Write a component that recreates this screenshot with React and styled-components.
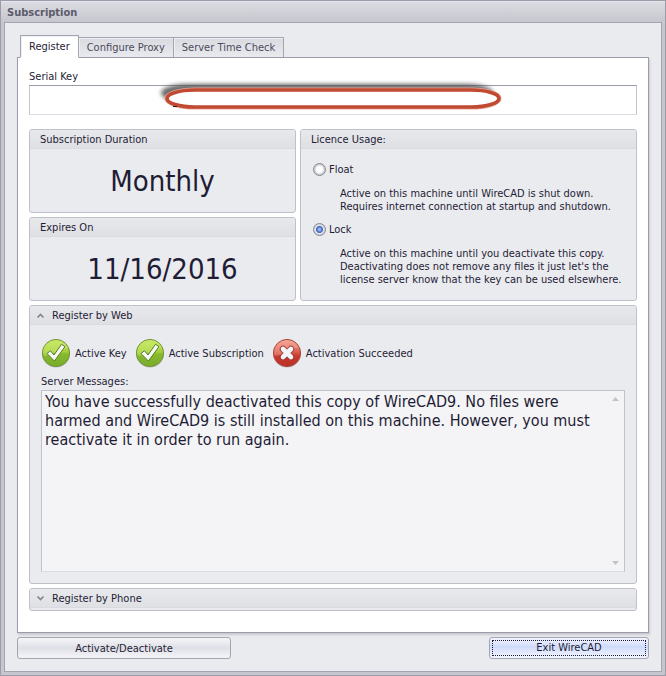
import { useState } from "react";
import styled, { createGlobalStyle, css } from "styled-components";

const MESSAGE = `You have successfully deactivated this copy of WireCAD9. No files were
harmed and WireCAD9 is still installed on this machine. However, you must
reactivate it in order to run again.`;

export default function App() {
  const [tab, setTab] = useState("Register");
  const [usage, setUsage] = useState("lock");
  const [serial, setSerial] = useState("");

  return (
    <>
      <GlobalStyle />
      <Window>
        <TitleBar>Subscription</TitleBar>
        <Body>
          <Tabs role="tablist">
            {["Register", "Configure Proxy", "Server Time Check"].map((name) => (
              <Tab
                key={name}
                type="button"
                role="tab"
                aria-selected={tab === name}
                $active={tab === name}
                onClick={() => setTab(name)}
              >
                {name}
              </Tab>
            ))}
          </Tabs>

          <Page>
            <FieldLabel htmlFor="serial">Serial Key</FieldLabel>
            <SerialWrapper>
              <SerialInput
                id="serial"
                type="text"
                value={serial}
                onChange={(e) => setSerial(e.target.value)}
              />
              <Marker />
            </SerialWrapper>

            <Columns>
              <Stack>
                <Group>
                  <GroupHeader>Subscription Duration</GroupHeader>
                  <BigValue>Monthly</BigValue>
                </Group>
                <Group>
                  <GroupHeader>Expires On</GroupHeader>
                  <BigValue>11/16/2016</BigValue>
                </Group>
              </Stack>

              <Group>
                <GroupHeader>Licence Usage:</GroupHeader>
                <Options>
                  <Option>
                    <Radio
                      type="radio"
                      name="usage"
                      checked={usage === "float"}
                      onChange={() => setUsage("float")}
                    />
                    Float
                  </Option>
                  <Hint>
                    Active on this machine until WireCAD is shut down.
                    <br />
                    Requires internet connection at startup and shutdown.
                  </Hint>
                  <Option>
                    <Radio
                      type="radio"
                      name="usage"
                      checked={usage === "lock"}
                      onChange={() => setUsage("lock")}
                    />
                    Lock
                  </Option>
                  <Hint>
                    Active on this machine until you deactivate this copy.
                    <br />
                    Deactivating does not remove any files it just let's the
                    <br />
                    license server know that the key can be used elsewhere.
                  </Hint>
                </Options>
              </Group>
            </Columns>

            <WebGroup>
              <Expander type="button" aria-expanded="true">
                <Chevron up />
                Register by Web
              </Expander>
              <WebBody>
                <Statuses>
                  <Status>
                    <OkIcon id="key" />
                    Active Key
                  </Status>
                  <Status>
                    <OkIcon id="sub" />
                    Active Subscription
                  </Status>
                  <Status>
                    <ErrorIcon />
                    Activation Succeeded
                  </Status>
                </Statuses>
                <FieldLabel htmlFor="messages">Server Messages:</FieldLabel>
                <MessageBox>
                  <Messages id="messages" readOnly value={MESSAGE} />
                  <ScrollTrack>
                    <Arrow up />
                    <Arrow />
                  </ScrollTrack>
                </MessageBox>
              </WebBody>
            </WebGroup>

            <PhoneGroup>
              <Expander type="button" aria-expanded="false">
                <Chevron />
                Register by Phone
              </Expander>
            </PhoneGroup>
          </Page>

          <Footer>
            <Button type="button" $width={214}>Activate/Deactivate</Button>
            <Button type="button" $width={160} $focused>
              <span>Exit WireCAD</span>
            </Button>
          </Footer>
        </Body>
      </Window>
    </>
  );
}

function Marker() {
  return (
    <MarkerSvg width="352" height="40" viewBox="0 0 352 40" aria-hidden="true">
      <defs>
        <filter id="soft" x="-5%" y="-50%" width="110%" height="200%">
          <feGaussianBlur stdDeviation="2" />
        </filter>
      </defs>
      <rect x="6" y="8" width="332" height="18" rx="26" ry="9" fill="#444" opacity="0.8" filter="url(#soft)" />
      <rect x="12" y="14" width="332" height="17" rx="28" ry="8.5" fill="#fff" stroke="#e8a899" strokeWidth="5" />
      <rect x="12" y="14" width="332" height="17" rx="28" ry="8.5" fill="#fff" stroke="#c14a32" strokeWidth="3.6" />
      <path d="M18 30.500h4" stroke="#222" strokeWidth="1" />
    </MarkerSvg>
  );
}

function Chevron({ up }) {
  return (
    <svg width="9" height="7" viewBox="0 0 9 7" aria-hidden="true">
      <path
        d={up ? "M1.500 5.500L4.500 2.500L7.500 5.500" : "M1.500 1.500L4.500 4.500L7.500 1.500"}
        fill="none"
        stroke="#85858f"
        strokeWidth="1.700"
      />
    </svg>
  );
}

function Arrow({ up }) {
  return (
    <svg width="7" height="4" viewBox="0 0 7 4" aria-hidden="true">
      <path d={up ? "M0 4L3.500 0L7 4Z" : "M0 0L3.500 4L7 0Z"} fill="#c3c3c9" />
    </svg>
  );
}

function OkIcon({ id }) {
  return (
    <svg width="30" height="30" viewBox="0 0 30 30" aria-hidden="true">
      <defs>
        <linearGradient id={`${id}-fill`} x1="0" y1="0" x2="0" y2="1">
          <stop offset="0" stopColor="#c4e65c" />
          <stop offset="0.45" stopColor="#a3cf3c" />
          <stop offset="0.55" stopColor="#86b92c" />
          <stop offset="1" stopColor="#78ac2a" />
        </linearGradient>
      </defs>
      <ellipse cx="15" cy="16" rx="14" ry="13.500" fill="#b9bdbb" />
      <circle cx="15" cy="15" r="13.600" fill={`url(#${id}-fill)`} stroke="#76943c" strokeWidth="1" />
      <path d="M2 14C3 6 9 2.500 15 2.500C21 2.500 25 6 27 10C20 10 14 17 2.500 18Z" fill="#d5f07a" opacity="0.4" />
      <path
        d="M6 15.500L9.500 12.800L13 17L20.500 6.300L24 8.600L13.400 23Z"
        fill="#f7faf3"
        stroke="#587c28"
        strokeWidth="1"
        strokeLinejoin="round"
      />
    </svg>
  );
}

function ErrorIcon() {
  return (
    <svg width="30" height="30" viewBox="0 0 30 30" aria-hidden="true">
      <defs>
        <linearGradient id="error-fill" x1="0" y1="0" x2="0" y2="1">
          <stop offset="0" stopColor="#f2a08c" />
          <stop offset="0.45" stopColor="#dc5f4f" />
          <stop offset="0.6" stopColor="#c83a2e" />
          <stop offset="1" stopColor="#ba2f25" />
        </linearGradient>
      </defs>
      <ellipse cx="15" cy="16" rx="14" ry="13.500" fill="#c2bdbf" />
      <circle cx="15" cy="15" r="13.600" fill="url(#error-fill)" stroke="#a8493f" strokeWidth="1" />
      <path d="M2 14C3 6 9 2.500 15 2.500C21 2.500 25 6 27 10C20 10 14 17 2.500 18Z" fill="#f8b8a8" opacity="0.35" />
      <path d="M11 11L19 19M19 11L11 19" stroke="#9c3a35" strokeWidth="6.400" strokeLinecap="round" />
      <path d="M11 11L19 19M19 11L11 19" stroke="#f3f5fa" strokeWidth="4.600" strokeLinecap="round" />
    </svg>
  );
}

const GlobalStyle = createGlobalStyle`
  * {
    box-sizing: border-box;
  }

  body {
    margin: 0;
    color: #1f1c35;
    font: 11px/13px "DejaVu Sans Condensed", "Noto Sans", sans-serif;
  }

  button, input, textarea {
    margin: 0;
    color: inherit;
    font: inherit;
  }

  svg {
    flex: none;
  }
`;

const Window = styled.main`
  display: flex;
  flex-direction: column;
  min-height: 100vh;
  padding: 0 3px 3px;
  background: #c6c6cf;
  border: 1px solid #9c9ba9;
`;

const TitleBar = styled.h1`
  margin: 0 -3px;
  padding: 4px 6px 3px;
  border-top: 1px solid #e6e6ec;
  background: linear-gradient(#dbdbe2, #c6c6ce);
  color: #5c5b6b;
  font-size: 11px;
  line-height: 13px;
  font-weight: bold;
`;

const Body = styled.div`
  display: flex;
  flex: 1;
  flex-direction: column;
  padding: 12px 12px;
  background: #eaebef;
  border: 1px solid #a5a5b1;
`;

const Tabs = styled.div`
  display: flex;
  align-items: flex-end;
  padding-left: 3px;
  height: 23px;
  margin-bottom: -1px;
`;

const Tab = styled.button`
  height: 21px;
  padding: 0 8px;
  border: 1px solid #a5a5b1;
  border-left: 0;
  background: linear-gradient(#d9dae0, #e9eaee);
  box-shadow: inset 1px 1px #eeeff3;
  color: #4b4a5c;

  ${(props) =>
    props.$active &&
    css`
      height: 23px;
      border-left: 1px solid #a5a5b1;
      border-bottom-color: #fff;
      background: #fff;
      color: #1f1c35;
      z-index: 1;
    `}
`;

const Page = styled.section`
  display: flex;
  flex: 1;
  flex-direction: column;
  padding: 12px 11px 21px;
  background: #fff;
  border: 1px solid #9c9ba9;
  box-shadow: 1px 2px 2px #c9c9d0;
`;

const FieldLabel = styled.label`
  display: block;
  line-height: 13px;
`;

const SerialWrapper = styled.div`
  position: relative;
  margin: 2px 0 14px;
`;

const SerialInput = styled.input`
  display: block;
  width: 100%;
  height: 30px;
  padding: 0 8px;
  background: #fff;
  border: 1px solid #c3c3cd;
  border-top-color: #9c9ba9;
  border-bottom-color: #dcdce4;
  outline: none;
`;

const MarkerSvg = styled.svg`
  position: absolute;
  top: -9px;
  left: 126px;
  pointer-events: none;
`;

const Columns = styled.div`
  display: grid;
  grid-template-columns: 267fr 337fr;
  gap: 4px;
  margin-bottom: 4px;
`;

const Stack = styled.div`
  display: grid;
  gap: 4px;
`;

const Group = styled.section`
  display: flex;
  flex-direction: column;
  border: 1px solid #bfc0c9;
  border-radius: 3px;
  background: #eaebef;
  overflow: hidden;
`;

const headerLook = css`
  margin: 0;
  border: 0;
  border-bottom: 1px solid #dadbe0;
  background: linear-gradient(#e8e9ed, #dfe0e4);
  font-size: 11px;
  line-height: 13px;
  font-weight: normal;
`;

const GroupHeader = styled.h2`
  ${headerLook}
  padding: 3px 10px 2px;
`;

const BigValue = styled.output`
  display: flex;
  flex: 1;
  align-items: center;
  justify-content: center;
  min-height: 60px;
  font-size: 29px;
  line-height: 36px;
`;

const Options = styled.div`
  padding: 14px 12px;
`;

const Option = styled.label`
  display: flex;
  align-items: center;
  gap: 3px;
`;

const Radio = styled.input`
  appearance: none;
  width: 13px;
  height: 13px;
  border: 1px solid #85858f;
  border-radius: 50%;
  background: radial-gradient(circle, #fff 3px, #c9cad2 5px, #eee 6px);

  &:checked {
    background: radial-gradient(circle, #b5cdf5 0, #4366c4 3px, #e3e5ee 4px, #c9cad2 6px);
  }
`;

const Hint = styled.p`
  margin: 11px 0 10px 27px;
  line-height: 13px;
  white-space: nowrap;

  &:last-child {
    margin-bottom: 0;
  }
`;

const WebGroup = styled(Group)`
  flex: 1;
  margin-bottom: 4px;
`;

const PhoneGroup = styled(Group)`
  padding-bottom: 2px;
`;

const Expander = styled.button`
  ${headerLook}
  display: flex;
  align-items: center;
  gap: 7px;
  padding: 3px 6px 2px;
  text-align: left;
`;

const WebBody = styled.div`
  display: flex;
  flex: 1;
  flex-direction: column;
  padding: 13px 11px 11px;
`;

const Statuses = styled.div`
  display: flex;
  gap: 8px;
  margin-bottom: 7px;
`;

const Status = styled.div`
  display: flex;
  align-items: center;
  gap: 4px;
`;

const MessageBox = styled.div`
  display: flex;
  flex: 1;
  margin-top: 2px;
  border: 1px solid #c0c1ca;
  border-bottom-color: #dcdce4;
  background: #f4f4f6;
`;

const Messages = styled.textarea`
  flex: 1;
  min-width: 0;
  padding: 1px 3px;
  border: 0;
  outline: none;
  resize: none;
  overflow: hidden;
  background: transparent;
  font-size: 16px;
  line-height: 19px;
`;

const ScrollTrack = styled.div`
  display: flex;
  flex-direction: column;
  justify-content: space-between;
  padding: 6px 5px;
`;

const Footer = styled.footer`
  display: flex;
  justify-content: space-between;
  margin-top: 4px;
`;

const Button = styled.button`
  width: ${(props) => props.$width}px;
  height: 22px;
  padding: 0;
  border: 1px solid #a5a5b1;
  border-radius: 3px;
  background: linear-gradient(#f6f6f9, #dedfe6 50%, #e4e5eb 60%, #f4f4f8);

  ${(props) =>
    props.$focused &&
    css`
      padding: 2px;
      background: linear-gradient(#f3f6ff, #cfdafa 45%, #dbe3fc 60%, #f2f6ff);

      span {
        display: block;
        border: 1px dotted #1f1c35;
        line-height: 14px;
      }
    `}
`;
